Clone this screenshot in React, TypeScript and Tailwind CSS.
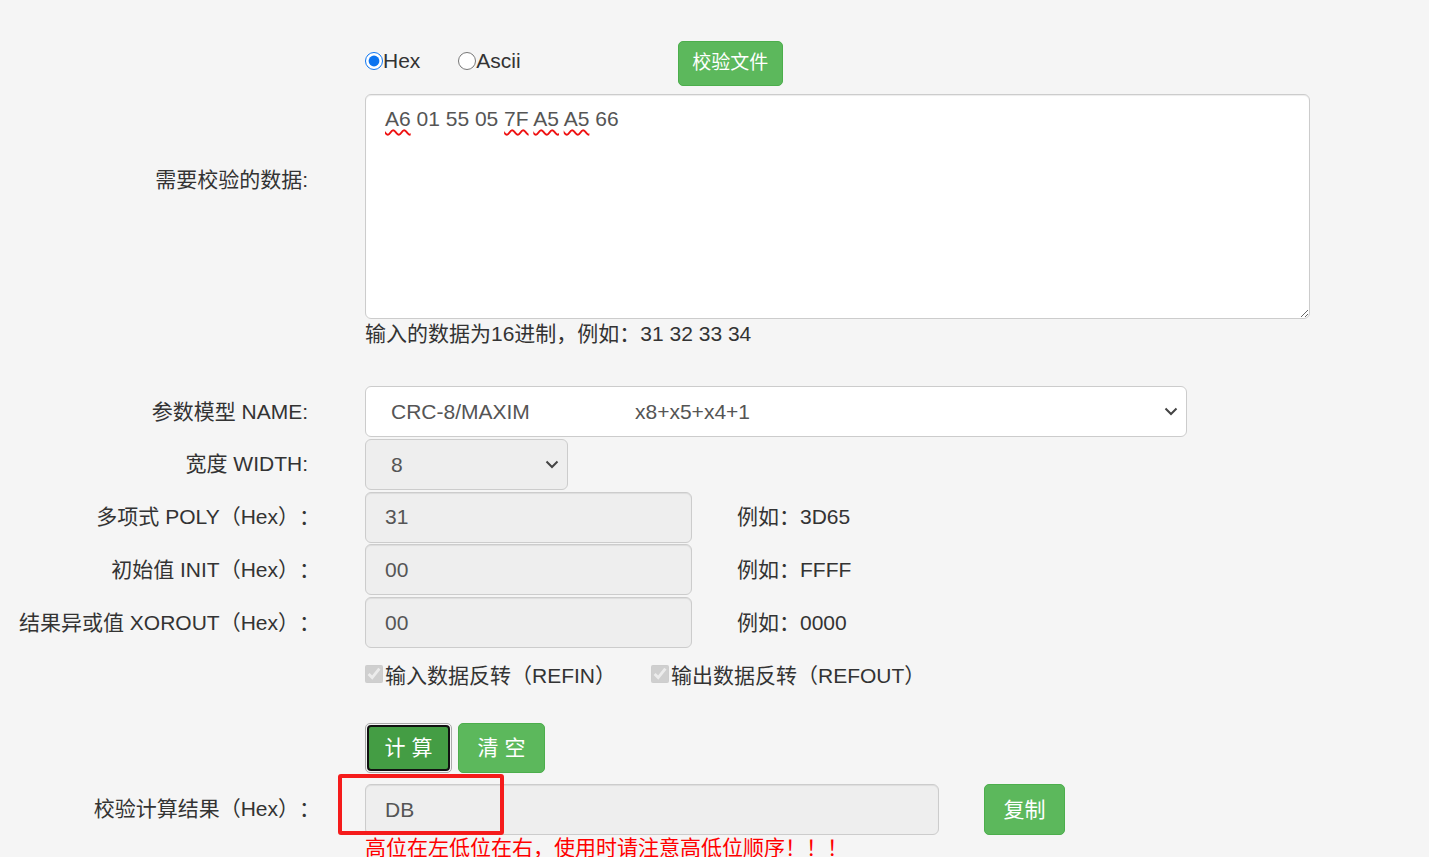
import React from "react";

const font = { fontFamily: '"Liberation Sans", Arial, "Noto Sans CJK SC", sans-serif' };

function Chevron() {
  return (
    <svg width="14" height="9" viewBox="0 0 14 9" className="shrink-0">
      <path d="M1.5 1.5 L7 7 L12.5 1.5" fill="none" stroke="#444" strokeWidth="2" />
    </svg>
  );
}

function Label({ children, wide }: { children: React.ReactNode; wide?: boolean }) {
  return (
    <div
      className={`w-[365px] shrink-0 ${wide ? "pr-[45px]" : "pr-[57px]"} text-right text-[21px] text-[#333] leading-[30px] whitespace-nowrap`}
    >
      {children}
    </div>
  );
}

function Row({ label, wide, children }: { label: React.ReactNode; wide?: boolean; children: React.ReactNode }) {
  return (
    <div className="flex h-[52.75px] items-start">
      <div className="flex h-[51px] items-center">
        <Label wide={wide}>{label}</Label>
      </div>
      {children}
    </div>
  );
}

function GreyInput({ value, width }: { value: string; width: string }) {
  return (
    <div
      className={`flex h-[51px] ${width} items-center rounded-[6px] border border-[#ccc] bg-[#eee] px-[19px] text-[21px] text-[#555] shadow-[inset_0_1px_1px_rgba(0,0,0,0.075)]`}
    >
      {value}
    </div>
  );
}

function Squiggle({ children }: { children: React.ReactNode }) {
  return (
    <span className="underline decoration-wavy decoration-[#e11] decoration-[1.5px] underline-offset-[3px]">
      {children}
    </span>
  );
}

export default function App() {
  return (
    <div
      className="min-h-[857px] w-full overflow-hidden bg-[#f5f5f5] text-[#333] [text-spacing-trim:space-all]"
      style={font}
    >
      <div className="pt-[41px]">
        {/* radio row */}
        <div className="flex h-[45px] items-center pl-[365px]">
          <div className="-mt-[5px] flex items-center">
            <label className="flex items-center text-[21px] text-[#333]">
              <input type="radio" name="fmt" defaultChecked className="m-0 h-[18px] w-[18px] accent-[#0b74f0]" />
              <span>Hex</span>
            </label>
            <label className="ml-[38px] flex items-center text-[21px] text-[#333]">
              <input type="radio" name="fmt" className="m-0 h-[18px] w-[18px]" />
              <span>Ascii</span>
            </label>
          </div>
          <button className="ml-[157px] h-[45px] w-[105px] rounded-[5px] border border-[#4cae4c] bg-[#5cb85c] text-[19px] text-white">
            校验文件
          </button>
        </div>

        {/* textarea row */}
        <div className="mt-[8px] flex items-start">
          <div className="mt-[71px]">
            <Label>需要校验的数据:</Label>
          </div>
          <div className="h-[225px] w-[945px] resize overflow-auto rounded-[6px] border border-[#ccc] bg-white px-[19px] pt-[9px] text-[21px] leading-[30px] text-[#555] shadow-[inset_0_1px_1px_rgba(0,0,0,0.075)]">
            <Squiggle>A6</Squiggle> 01 55 05 <Squiggle>7F</Squiggle> <Squiggle>A5</Squiggle> <Squiggle>A5</Squiggle> 66
          </div>
        </div>
        <div className="pl-[365px] text-[21px] leading-[30px] text-[#333]">输入的数据为16进制，例如：31 32 33 34</div>

        {/* params */}
        <div className="mt-[37px]">
          <Row label="参数模型 NAME:">
            <div className="flex h-[51px] w-[822px] items-center rounded-[6px] border border-[#ccc] bg-white pl-[25px] pr-[8px] text-[21px] text-[#555]">
              <span className="w-[244px]">CRC-8/MAXIM</span>
              <span className="flex-1">x8+x5+x4+1</span>
              <Chevron />
            </div>
          </Row>
          <Row label="宽度 WIDTH:">
            <div className="flex h-[51px] w-[203px] items-center rounded-[6px] border border-[#ccc] bg-[#eee] pl-[25px] pr-[8px] text-[21px] text-[#555]">
              <span className="flex-1">8</span>
              <Chevron />
            </div>
          </Row>
          <Row label="多项式 POLY（Hex）：" wide>
            <GreyInput value="31" width="w-[327px]" />
            <div className="ml-[45px] flex h-[51px] items-center text-[21px] text-[#333]">例如：3D65</div>
          </Row>
          <Row label="初始值 INIT（Hex）：" wide>
            <GreyInput value="00" width="w-[327px]" />
            <div className="ml-[45px] flex h-[51px] items-center text-[21px] text-[#333]">例如：FFFF</div>
          </Row>
          <Row label="结果异或值 XOROUT（Hex）：" wide>
            <GreyInput value="00" width="w-[327px]" />
            <div className="ml-[45px] flex h-[51px] items-center text-[21px] text-[#333]">例如：0000</div>
          </Row>
        </div>

        {/* checkboxes */}
        <div className="mt-[11px] flex h-[30px] items-center pl-[365px] text-[21px] text-[#333]">
          <label className="flex items-center">
            <input type="checkbox" checked disabled readOnly className="m-0 -mt-[4px] h-[18px] w-[18px]" />
            <span className="ml-[2px]">输入数据反转（REFIN）</span>
          </label>
          <label className="ml-[35px] flex items-center">
            <input type="checkbox" checked disabled readOnly className="m-0 -mt-[4px] h-[18px] w-[18px]" />
            <span className="ml-[2px]">输出数据反转（REFOUT）</span>
          </label>
        </div>

        {/* buttons */}
        <div className="mt-[32px] flex h-[50px] items-center gap-[6px] pl-[365px]">
          <button className="flex h-[50px] w-[87px] items-center justify-center rounded-[5px] border border-[#aaa] bg-[#f5f5f5] p-[1px]">
            <span className="flex h-full w-full items-center justify-center whitespace-pre rounded-[4px] border-[2px] border-[#111] bg-[#449d44] text-[21px] text-white">
              计 算
            </span>
          </button>
          <button className="h-[50px] w-[87px] whitespace-pre rounded-[5px] border border-[#4cae4c] bg-[#5cb85c] text-[21px] text-white">
            清 空
          </button>
        </div>

        {/* result */}
        <div className="mt-[11px] flex items-start">
          <div className="flex h-[51px] items-center">
            <Label wide>校验计算结果（Hex）：</Label>
          </div>
          <div className="relative">
            <GreyInput value="DB" width="w-[574px]" />
            <div className="pointer-events-none absolute left-[-27px] top-[-10px] h-[61px] w-[166px] rounded-[3px] border-[4px] border-[#f51b1b]" />
          </div>
          <button className="ml-[45px] h-[51px] w-[81px] rounded-[5px] border border-[#4cae4c] bg-[#5cb85c] text-[21px] text-white">
            复制
          </button>
        </div>
        <div className="-mt-[2px] pl-[365px] text-[21px] leading-[30px] text-[#ff0000]">
          高位在左低位在右，使用时请注意高低位顺序！！！
        </div>
      </div>
    </div>
  );
}
